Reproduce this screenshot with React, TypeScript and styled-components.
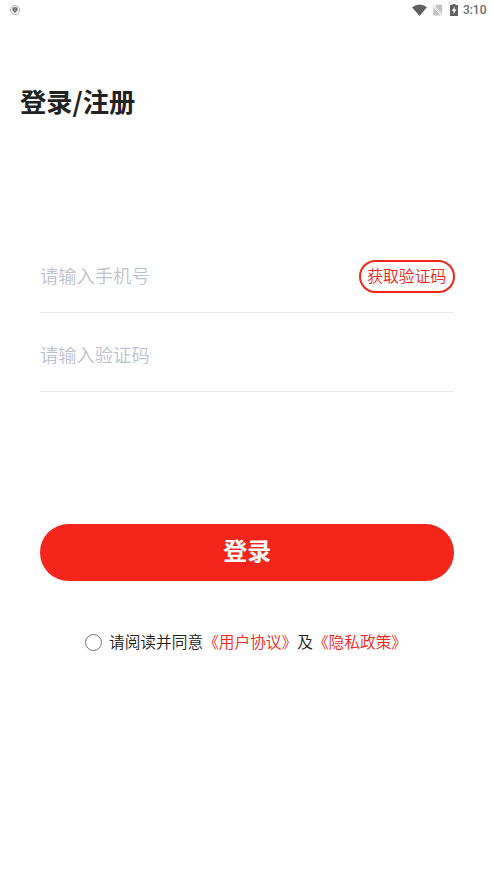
import React from "react";
import styled, { createGlobalStyle } from "styled-components";

const Global = createGlobalStyle`
  * { box-sizing: border-box; }
  body { margin: 0; background: #fff; font-family: "Noto Sans CJK SC", sans-serif; }
`;
const Screen = styled.main`
  width: 493px; height: 878px; display: flex; flex-direction: column; overflow: hidden; background: #fff;
`;
const StatusBar = styled.header`
  height: 20px; display: flex; align-items: center; justify-content: space-between; padding: 0 6.5px 0 10px;
`;
const StatusIcons = styled.div`
  display: flex; align-items: center; color: #606060;
  svg { display: block; }
`;
const Wifi = styled.svg` margin-right: 5px; `;
const NoSim = styled.svg` margin-right: 7px; color: #c4c4c4; `;
const Clock = styled.span`
  margin-left: 5px; font: 500 12px/20px Roboto, sans-serif; color: #6c6c6c;
`;
const Title = styled.h1`
  margin: 61px 0 0 20px; font-size: 26.3px; line-height: 40px; font-weight: 700; color: #222;
`;
const Form = styled.form`
  margin: 113px 39px 0 40px; display: flex; flex-direction: column;
`;
const Field = styled.div`
  height: 79px; padding-top: 5px; display: flex; align-items: center; justify-content: space-between; border-bottom: 1px solid #ebebeb;
`;
const Input = styled.input`
  width: 250px; padding: 0 0 2px; border: 0; outline: 0; background: transparent;
  font: 350 18.3px/28px "Noto Sans CJK SC", sans-serif;
  &::placeholder { color: #bfc2cc; opacity: 1; }
`;
const CodeButton = styled.button`
  width: 95.5px; height: 33px; margin: 2px -0.5px 0 0; padding: 0 0 1px; border: 2px solid #f4251b; border-radius: 17px; background: #fff;
  color: #f4251b; font: 350 15.8px/24px "Noto Sans CJK SC", sans-serif;
`;
const Login = styled.button`
  margin: 131.5px -0.4px 0 0; height: 57.5px; padding: 0 0 4px; border: 0; border-radius: 29px; background: #f4251b; color: #fff;
  font: 700 24px/36px "Noto Sans CJK SC", sans-serif;
`;
const Agreement = styled.div`
  margin: 49px 0 0 85px; display: flex; align-items: center; height: 24px; font-size: 15.7px; font-weight: 350; color: #222; white-space: nowrap;
`;
const Radio = styled.span`
  width: 17px; height: 17px; margin-right: 7px; border: 1px solid #777; border-radius: 50%;
`;
const Terms = styled.span` line-height: 24px; `;
const Policy = styled.span` color: #f4251b; `;

export default function App() {
  return (
    <Screen lang="zh-CN">
      <Global />
      <StatusBar>
        <svg width="10" height="10" viewBox="0 0 10 10">
          <circle cx="5" cy="5" r="4.5" fill="none" stroke="#999" strokeWidth=".8" />
          <path d="M2.5 2.8 5 2l2.5.8v2.4L5 8 2.5 5.2Z" fill="#666" />
          <path d="M4 4h2L5 5.8" fill="none" stroke="#ccc" strokeWidth=".6" />
        </svg>
        <StatusIcons>
          <Wifi width="15" height="12" viewBox="0 0 15 12"><path d="M0 3.3Q7.5-2.5 15 3.3L7.5 12Z" fill="currentColor" /></Wifi>
          <NoSim width="11" height="12" viewBox="0 0 11 12">
            <path d="M4 .8h6v9L3.2 2.3ZM1.2 3.2 8.8 11.5H1.2Z" fill="currentColor" />
            <path d="m.5 1 10 10.7" stroke="currentColor" strokeWidth=".8" />
          </NoSim>
          <svg width="8" height="12" viewBox="0 0 8 12">
            <path fillRule="evenodd" d="M2.5 0h3v1H8v11H0V1h2.5ZM4.7 2.5 1.7 7h1.8v3.2l3-4.8H4.7Z" fill="currentColor" />
          </svg>
          <Clock>3:10</Clock>
        </StatusIcons>
      </StatusBar>
      <Title>登录/注册</Title>
      <Form onSubmit={(e) => e.preventDefault()}>
        <Field><Input placeholder="请输入手机号" /><CodeButton type="button">获取验证码</CodeButton></Field>
        <Field><Input placeholder="请输入验证码" /></Field>
        <Login>登录</Login>
      </Form>
      <Agreement>
        <Radio />
        <Terms>请阅读并同意<Policy>《用户协议》</Policy>及<Policy>《隐私政策》</Policy></Terms>
      </Agreement>
    </Screen>
  );
}
